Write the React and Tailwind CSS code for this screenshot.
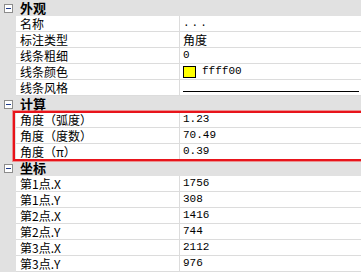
import React from "react";

const cjk = { fontFamily: '"SimSun","Noto Sans CJK SC",sans-serif' };
const mono = { fontFamily: '"Liberation Mono","Noto Sans CJK SC",monospace' };

function Minus() {
    return (
        <div className="w-[9px] h-[9px] border border-[#8c8c8c] bg-white flex items-center justify-center">
            <div className="w-[5px] h-px bg-[#1f3c8c]" />
        </div>
    );
}

function Header({ title }) {
    return (
        <div className="h-4 flex items-center bg-[#e1e1e1]">
            <div className="w-4 flex justify-center pl-px">
                <Minus />
            </div>
            <span className="pl-1 text-[13px] leading-4 font-bold text-black" style={cjk}>{title}</span>
        </div>
    );
}

function Row({ name, children }) {
    return (
        <div className="h-4 flex bg-[#e1e1e1]">
            <div className="w-4" />
            <div className="flex-1 flex bg-white border-b border-[#dcdcdc]">
                <div className="w-[164px] pl-1 text-[12px] leading-[15px] text-black border-r border-[#dcdcdc]" style={cjk}>{name}</div>
                <div className="flex-1 pl-[3px] flex items-center text-[11px] leading-[15px] text-black" style={mono}>{children}</div>
            </div>
        </div>
    );
}

export default function App() {
    return (
        <div className="w-[361px] h-[272px] overflow-hidden bg-[#e1e1e1] select-none">
            <Header title="外观" />
            <Row name="名称"><span className="tracking-[2px]">...</span></Row>
            <Row name="标注类型"><span className="text-[12px]" style={cjk}>角度</span></Row>
            <Row name="线条粗细">0</Row>
            <Row name="线条颜色">
                <div className="w-[13px] h-[12px] bg-[#ffff00] border border-black" />
                <span className="pl-[6px]">ffff00</span>
            </Row>
            <Row name="线条风格"><div className="w-[176px] h-px bg-black mt-[7px]" /></Row>
            <Header title="计算" />
            <div className="relative">
                <Row name="角度（弧度）">1.23</Row>
                <Row name="角度（度数）">70.49</Row>
                <Row name="角度（π）">0.39</Row>
                <div className="absolute left-[13px] -right-1 -top-[1px] -bottom-[1px] border-2 border-[#e8141b] shadow-[0_0_0_1px_rgba(240,110,110,0.7)] pointer-events-none" />
            </div>
            <Header title="坐标" />
            <Row name="第1点.X">1756</Row>
            <Row name="第1点.Y">308</Row>
            <Row name="第2点.X">1416</Row>
            <Row name="第2点.Y">744</Row>
            <Row name="第3点.X">2112</Row>
            <Row name="第3点.Y">976</Row>
        </div>
    );
}
